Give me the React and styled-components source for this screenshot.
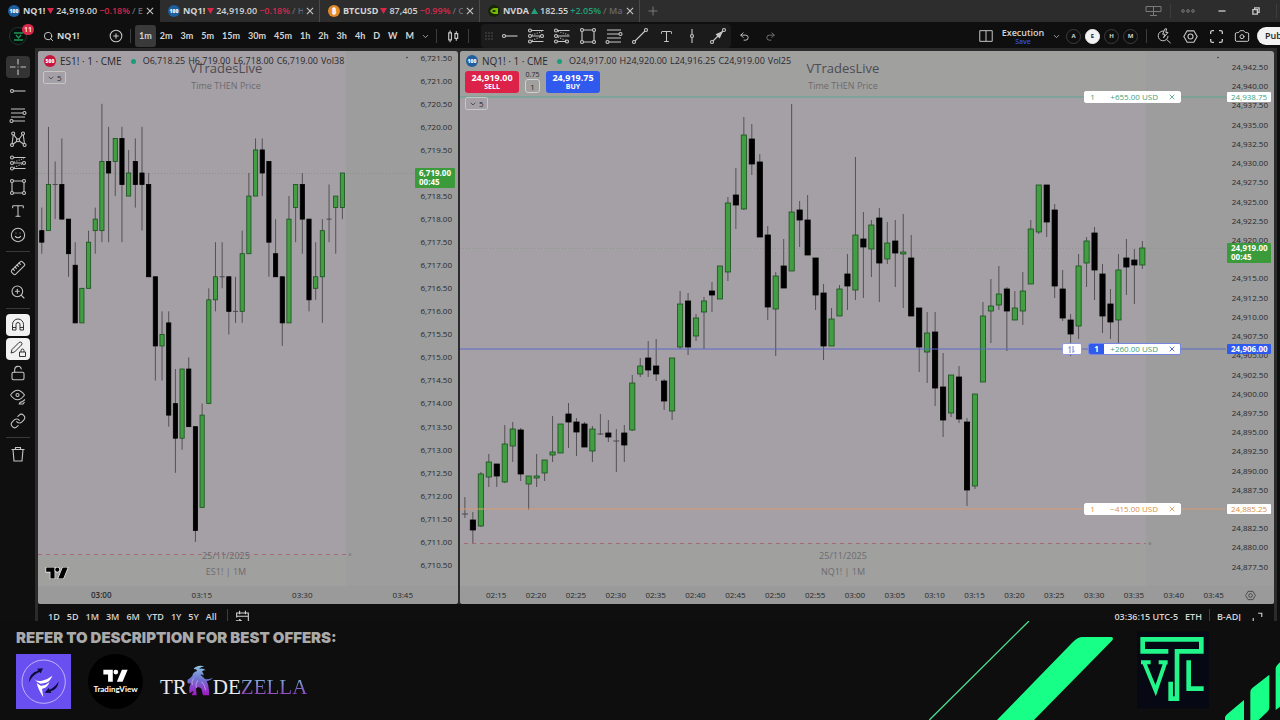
import React from 'react';
import styled, { createGlobalStyle, css } from 'styled-components';
import { Type, Smile, Ruler, ZoomIn, LockOpen, Link, Undo2, Redo2, ChevronDown, Search, CirclePlus, Camera } from 'lucide-react';

const GlobalStyle = createGlobalStyle`
  * { box-sizing: border-box; }
  body {
    margin: 0;
    background: #0e0e0e;
    color: #d4d4d4;
    font-family: 'Open Sans', 'Noto Sans', sans-serif;
    font-size: 9px;
    line-height: 12px;
  }
  button, input {
    font: inherit;
    color: inherit;
    background: none;
    border: 0;
    padding: 0;
    margin: 0;
  }
  button { cursor: pointer; }
  svg { display: block; flex: none; }
`;

const Page = styled.div`
  display: flex;
  flex-direction: column;
  min-height: 100vh;
  overflow: hidden;
`;

/* ---------- window tabs ---------- */

const TabBar = styled.header`
  display: flex;
  height: 22px;
  background: #2d2d2d;
`;

const Tab = styled.div`
  display: flex;
  align-items: center;
  width: 160px;
  padding: 0 4px 0 8px;
  gap: 2px;
  font-weight: 600;
  white-space: nowrap;
  background: ${p => (p.$active ? '#0f0f0f' : 'transparent')};
  border-right: 1px solid ${p => (p.$divider ? '#4a4a4a' : 'transparent')};
`;

const Symbol = styled.span`
  font-weight: 700;
`;

const Change = styled.span`
  color: ${p => (p.$up ? '#22a07a' : '#d8274b')};
`;

const TabHint = styled.span`
  flex: 1;
  min-width: 0;
  overflow: hidden;
  color: #6a6a6a;
`;

const CoinBadge = styled.span`
  display: flex;
  align-items: center;
  justify-content: center;
  flex: none;
  width: 12px;
  height: 12px;
  margin-right: 1px;
  border-radius: 50%;
  background: ${p => p.$bg};
  color: #fff;
  font-size: ${p => (p.$large ? 8 : 5)}px;
  line-height: 12px;
  font-weight: 800;
`;

const IconButton = styled.button`
  display: flex;
  align-items: center;
  justify-content: center;
  width: ${p => p.$w || 26}px;
  height: 22px;
  flex: none;
  color: ${p => (p.$dim ? '#7a7a7a' : '#c8c8c8')};
`;

const CloseButton = styled(IconButton)`
  width: 10px;
`;

const WindowControls = styled.div`
  display: flex;
  margin-left: auto;
  align-items: center;
`;

const Divider = styled.span`
  flex: none;
  width: 1px;
  height: 14px;
  margin: 0 ${p => p.$gap || 0}px;
  background: #3d3d3d;
`;

/* ---------- top toolbar ---------- */

const Toolbar = styled.nav`
  display: flex;
  align-items: center;
  height: 26px;
  padding-top: 2px;
  background: #0f0f0f;
  font-weight: 600;
  overflow: hidden;
`;

const Avatar = styled.button`
  position: relative;
  display: flex;
  align-items: center;
  justify-content: center;
  width: 18px;
  height: 18px;
  margin-left: 9px;
  border-radius: 50%;
  border: 1px solid #26302b;
  background: #07100f;
`;

const Notice = styled.span`
  position: absolute;
  top: -4px;
  right: -8px;
  width: 12px;
  height: 11px;
  border-radius: 6px;
  background: #d8274b;
  color: #fff;
  font-size: 7px;
  line-height: 11px;
`;

const SearchButton = styled.button`
  display: flex;
  align-items: center;
  gap: 3px;
  width: 63px;
  margin-left: 16px;
  font-weight: 700;
`;

const Interval = styled.button`
  height: 22px;
  padding: 0 4px;
  border-radius: 3px;
  font-family: Lato, sans-serif;
  font-weight: 700;
  background: ${p => (p.$active ? '#3a3a3a' : 'transparent')};
`;

const Favorites = styled.div`
  display: flex;
  align-items: center;
  height: 24px;
  margin-left: 10px;
  padding: 0 0 0 4px;
  gap: 4px;
  border-radius: 4px;
  background: #1b1b1b;
`;

const FavoriteTools = styled.div`
  display: flex;
`;

const Spacer = styled.div`
  flex: 1;
`;

const LayoutName = styled.button`
  width: 46px;
  font-weight: 600;
  line-height: 10px;
  text-align: center;
`;

const SaveLabel = styled.span`
  display: block;
  color: #3152e0;
  font-size: 7px;
  line-height: 7px;
`;

const Preset = styled.button`
  flex: none;
  width: 15px;
  height: 15px;
  margin-right: 4px;
  border-radius: 50%;
  border: 1px solid ${p => (p.$active ? '#f2f2f2' : '#413a3c')};
  background: ${p => (p.$active ? '#f2f2f2' : 'transparent')};
  color: ${p => (p.$active ? '#222' : '#d4d4d4')};
  font-size: 6px;
  line-height: 13px;
  font-weight: 700;
`;

const Publish = styled.button`
  flex: none;
  width: 23px;
  height: 18px;
  margin-left: 2px;
  padding-left: 8px;
  border-radius: 9px 0 0 9px;
  background: #f2f2f2;
  color: #222;
  text-align: left;
  overflow: hidden;
`;

/* ---------- workspace ---------- */

const Workspace = styled.main`
  display: flex;
  flex: 1;
  min-height: 540px;
  padding-right: 3px;
  background: #0f0f0f;
`;

const SideBar = styled.aside`
  display: flex;
  flex-direction: column;
  align-items: center;
  flex: none;
  width: 35px;
  padding-top: 7px;
`;

const SideButton = styled.button`
  display: flex;
  align-items: center;
  justify-content: center;
  width: 24px;
  height: 22px;
  margin: 1px 0;
  border-radius: 4px;
  color: ${p => (p.$on ? '#333' : '#c4c4c4')};
  background: ${p => (p.$on ? '#f1f1f1' : p.$active ? '#343434' : 'transparent')};
`;

const SideRule = styled.span`
  width: 24px;
  height: 1px;
  margin: 4px 0;
  background: #3a3a3a;
`;

const Stage = styled.div`
  display: flex;
  flex-direction: column;
  flex: 1;
  min-width: 0;
  padding: 3px 3px 0;
  background: #2b2b2b;
`;

const Panes = styled.div`
  display: flex;
  flex: 1;
  gap: 2px;
`;

const Pane = styled.section`
  display: flex;
  flex-direction: column;
  flex: ${p => p.$grow} 1 0;
  min-width: 0;
  border-radius: 3px;
  overflow: hidden;
  background: #9c9d9c;
  color: #29292c;
`;

const PaneBody = styled.div`
  display: flex;
  flex: 1;
`;

const Plot = styled.div`
  position: relative;
  flex: 1;
  min-width: 0;
`;

const Canvas = styled.svg`
  position: absolute;
  inset: 0;
  width: 100%;
  height: 100%;
`;

const Watermark = styled.div`
  position: absolute;
  left: 0;
  right: 0;
  ${p => (p.$bottom ? css`bottom: 8px;` : css`top: 9px;`)}
  display: flex;
  flex-direction: column;
  align-items: center;
  gap: 4px;
  color: #6c6b6e;
`;

const WatermarkTitle = styled.div`
  color: #4d4c52;
  font-size: 13px;
  line-height: 16px;
`;

const Legend = styled.div`
  position: relative;
  display: flex;
  align-items: center;
  height: 12px;
  margin: 4px 0 0 6px;
  gap: 3px;
  font-size: 8px;
  white-space: nowrap;
`;

const LegendName = styled.span`
  font-size: 10px;
`;

const LiveDot = styled.span`
  width: 5px;
  height: 5px;
  margin: 0 4px 0 6px;
  border-radius: 50%;
  background: #1a9d79;
`;

const LegendValues = styled.span`
  display: flex;
  gap: 3px;
  font-size: 9px;
`;

const CollapseButton = styled.button`
  position: relative;
  display: flex;
  align-items: center;
  gap: 2px;
  height: 13px;
  margin: 4px 0 0 5px;
  padding: 0 3px;
  border: 1px solid #c6c6c6;
  border-radius: 2px;
  font-size: 8px;
`;

const TradeRow = styled.div`
  position: relative;
  display: flex;
  gap: 6px;
  height: 22px;
  margin: 4px 0 0 5px;
`;

const TradeButton = styled.button`
  width: 54px;
  border-radius: 3px;
  background: ${p => (p.$buy ? '#3059ee' : '#dc2248')};
  color: #fff;
  font-weight: 700;
  font-size: 9px;
  line-height: 9px;
`;

const TradeSide = styled.span`
  display: block;
  font-size: 7px;
`;

const Quantity = styled.label`
  display: flex;
  flex-direction: column;
  align-items: center;
  width: 15px;
  font-size: 7px;
  line-height: 7px;
`;

const QuantityInput = styled.input`
  width: 15px;
  height: 14px;
  margin-top: 1px;
  border: 1px solid #d0d0d0;
  border-radius: 3px;
  text-align: center;
  font-size: 8px;
`;

const Order = styled.div`
  position: absolute;
  right: 45px;
  top: ${p => p.$at}%;
  display: flex;
  align-items: center;
  height: 12px;
  margin-top: -6px;
  gap: ${p => (p.$open ? 6 : 0)}px;
  color: ${p => p.$color};
`;

const OrderPill = styled.div`
  display: flex;
  align-items: center;
  width: ${p => p.$w}px;
  height: 12px;
  border-radius: 2px;
  background: #fff;
  border: 1px solid ${p => p.$color || '#fff'};
  font-size: 8px;
  line-height: 10px;
  overflow: hidden;
`;

const OrderCount = styled.span`
  width: 15px;
  text-align: center;
  ${p => p.$solid && css`
    background: #3059ee;
    color: #fff;
    font-weight: 700;
  `}
`;

const OrderValue = styled.span`
  flex: 1;
  text-align: right;
  padding-right: 6px;
  color: ${p => p.$color};
`;

const OrderClose = styled.button`
  width: 16px;
  display: flex;
  justify-content: center;
  color: ${p => p.$color};
`;

const PriceAxis = styled.div`
  position: relative;
  display: flex;
  flex-direction: column;
  justify-content: space-between;
  flex: none;
  width: ${p => p.$w}px;
  padding: ${p => p.$pad};
  font-size: 8px;
  line-height: 10px;
  text-align: right;
`;

const PriceTag = styled.div`
  position: absolute;
  left: 1px;
  right: 3px;
  top: ${p => p.$at}%;
  margin-top: -5px;
  padding: 0 3px 0 4px;
  border-radius: 1px;
  background: ${p => p.$bg};
  color: ${p => p.$color || '#fff'};
  font-weight: ${p => (p.$color ? 400 : 700)};
  line-height: ${p => (p.$tall ? 9 : 10)}px;
  ${p => p.$tall && css`padding-bottom: 2px;`}
  text-align: left;
`;

const TimeAxis = styled.div`
  display: flex;
  align-items: center;
  height: 18px;
  background: #999a99;
  font-size: 8px;
`;

const TimeLabels = styled.div`
  display: flex;
  justify-content: space-between;
  flex: 1;
  padding: ${p => p.$pad};
`;

const TimeLabel = styled.span`
  font-weight: ${p => (p.$major ? 600 : 400)};
`;

const BottomBar = styled.div`
  display: flex;
  align-items: flex-start;
  height: 17px;
  background: #0f0f0f;
  font-size: 9px;
  line-height: 26px;
  font-weight: 600;
  overflow: hidden;
`;

const RangeList = styled.div`
  display: flex;
  gap: 7px;
  padding: 0 10px;
`;

const ClipDivider = styled(Divider)`
  margin-top: 5px;
`;

const BottomIcon = styled.button`
  height: 26px;
  padding: 0 11px 0 ${p => (p.$tight ? 4 : 7)}px;
`;

const BottomInfo = styled.div`
  display: flex;
  gap: 7px;
  margin-left: auto;
`;

/* ---------- banner ---------- */

const Banner = styled.footer`
  position: relative;
  flex: none;
  height: 99px;
  padding: 7px 16px 0;
  background: #0e0e0e;
`;

const BannerTitle = styled.h2`
  margin: 0;
  font-family: Inter, sans-serif;
  font-size: 15px;
  line-height: 20px;
  font-weight: 900;
  color: #aaa;
`;

const Sponsors = styled.div`
  display: flex;
  align-items: center;
  gap: 17px;
  margin-top: 6px;
`;

const ViewLogo = styled.div`
  display: flex;
  flex-direction: column;
  align-items: center;
  justify-content: center;
  gap: 1px;
  width: 55px;
  height: 55px;
  border-radius: 50%;
  background: #000;
  color: #fff;
  font-family: Lato, sans-serif;
  font-size: 8px;
  line-height: 10px;
  font-weight: 700;
`;

const Zella = styled.div`
  display: flex;
  align-items: flex-end;
  font-family: 'Liberation Serif', serif;
  font-size: 21px;
  line-height: 24px;
  color: #e9e9ee;
`;

const ZellaFade = styled.span`
  background: linear-gradient(180deg, #7fb4dc 15%, #7a68c8 55%, #a13fc0 90%);
  background-clip: text;
  color: transparent;
`;

const Decor = styled.svg`
  position: absolute;
  right: 0;
  bottom: 0;
`;

/* ---------- icons ---------- */

const Glyph = ({ d, size = 18, fill, dots = [], w = 1.1 }) => (
  <svg width={size} height={size} viewBox="0 0 18 18" fill="none" stroke="currentColor" strokeWidth={w}>
    <path d={d} fill={fill || 'none'} />
    {dots.map(([x, y], i) => <circle key={i} cx={x} cy={y} r="1.5" />)}
  </svg>
);

const CrossIcon = () => <Glyph d="M9 1v5.500M9 11.500V17M1 9h5.500M11.500 9H17M8.500 9h1" />;
const RayIcon = () => <Glyph d="M4.500 9H16.500" dots={[[3, 9]]} />;
const FibIcon = () => <Glyph d="M2 3h14M2 7h12M2 11h14M4 15h12" dots={[[15.5, 7], [2.5, 15]]} />;
const PatternIcon = () => (
  <Glyph d="M3 14.500 4.200 5M5 5.200 8.500 9.500M9.800 9.500 13.200 5M14.300 5 15.500 14M4 14.200 8.200 11M14.500 14 10.200 11" dots={[[3, 15], [4.2, 3.5], [9, 10.3], [14, 3.5], [15.6, 15]]} />
);
const ProjectionIcon = () => (
  <svg width="18" height="18" viewBox="0 0 18 18" fill="none" stroke="currentColor" strokeWidth="1.1">
    <path d="M4.500 3.500H16.500M4.500 9H13.500M4.500 14.500H16.500" />
    <path d="M5 8 15 4.500M5 13.500l8-3.500" strokeDasharray="1 1.500" />
    <circle cx="3" cy="3.500" r="1.500" /><circle cx="3" cy="9" r="1.500" />
    <circle cx="3" cy="14.500" r="1.500" /><circle cx="15" cy="9" r="1.500" />
  </svg>
);
const ChannelIcon = () => (
  <svg width="18" height="18" viewBox="0 0 18 18" fill="none" stroke="currentColor" strokeWidth="1.1">
    <path d="M4.500 3.500H16.500M4.500 9H16.500M4.500 14.500H12.500" />
    <path d="M5 4.500 16 8M5 10l8 3.500" strokeDasharray="1 1.500" />
    <circle cx="3" cy="3.500" r="1.500" /><circle cx="3" cy="9" r="1.500" />
    <circle cx="3" cy="14.500" r="1.500" /><circle cx="14" cy="14.500" r="1.500" />
  </svg>
);
const BoxIcon = () => (
  <Glyph d="M4.500 3h9M4.500 15h9M3 4.500v9M15 4.500v9" dots={[[3, 3], [15, 3], [3, 15], [15, 15]]} />
);
const TrendIcon = () => <Glyph d="M4 14 14 4" dots={[[3, 15], [15, 3]]} />;
const VLineIcon = () => <Glyph d="M9 2v5.500M9 10.500V16" dots={[[9, 9]]} />;
const ArrowLineIcon = () => (
  <svg width="18" height="18" viewBox="0 0 18 18" fill="none" stroke="currentColor" strokeWidth="1.1">
    <path d="M4 14 14 4" /><path d="M13 5 7.500 7.500l3 3z" fill="currentColor" />
    <circle cx="3" cy="15" r="1.500" /><circle cx="15" cy="3" r="1.500" />
  </svg>
);
const MagnetIcon = () => <Glyph d="M3.500 14V8.500a5.500 5.500 0 0 1 11 0V14H11V8.500a2 2 0 0 0-4 0V14zM3.500 11.500H7M11 11.500h3.500" w={1} />;
const PencilLockIcon = () => <Glyph d="M2 13l1-3.500L10 2.500q1.500-1 2.500 0t0 2.500L5.500 12zM10.500 12h6v4.500h-6zM12 12v-1.500a1.500 1.500 0 0 1 3 0V12" w={1} />;
const EyeIcon = () => <Glyph d="M1.500 7q7-9.500 14 0-7 9.500-14 0M10 16.500q1-3 3-2.500l3-2.500M11 16h3l1.500-2" dots={[[8.5, 7]]} />;
const TrashIcon = () => <Glyph d="M2.500 4.500h13M6.500 4.500V2.500h5v2M4 4.500 5 16h8l1-11.500" />;
const CandleIcon = () => <Glyph size={14} d="M3.500 5h3.500v9H3.500zM5.250 2v3M5.250 14v3M11.500 6H15v6h-3.500zM13.250 3v3M13.250 12v3" w={1.5} />;
const GridIcon = () => <Glyph size={16} d="M2 3h14v12H2zM9 3v12" />;
const HexIcon = ({ size = 18 }) => <Glyph size={size} d="M5 2.200h8L17 9l-4 6.800H5L1 9zM12 9a3 3 0 1 1-6 0 3 3 0 0 1 6 0" w={1.3} />;
const FullIcon = () => <Glyph size={15} d="M2 6V4q0-2 2-2h2M12 2h2q2 0 2 2v2M16 12v2q0 2-2 2h-2M6 16H4q-2 0-2-2v-2" w={1.6} />;
const FlashSearchIcon = () => <Glyph size={16} d="M9 3.500A5.500 5.500 0 1 0 13.500 9M12 13l4.500 4M10 1 7.500 7H10L8.500 11 13.500 5H11L12 1z" />;
const XIcon = ({ size = 8 }) => <Glyph size={size} d="M2 2 16 16M16 2 2 16" w={2.4} />;
const PlusIcon = () => <Glyph size={10} d="M9 1v16M1 9h16" w={1.8} />;
const ScreensIcon = () => (
  <svg width="17" height="12" viewBox="0 0 17 12" fill="none" stroke="currentColor">
    <path d="M1 1.500h15v5H1zM8.500 1.500v9M5 10.500h7" />
  </svg>
);
const DotsIcon = () => (
  <svg width="14" height="6" viewBox="0 0 14 6" fill="none" stroke="currentColor">
    <circle cx="2" cy="3" r="1.300" /><circle cx="7" cy="3" r="1.300" /><circle cx="12" cy="3" r="1.300" />
  </svg>
);
const RestoreIcon = () => <Glyph size={8} d="M2 6h10v10H2zM6 6V2h10v10h-4" w={3} />;
const MinimizeIcon = () => <Glyph size={8} d="M1 9h16" w={3} />;
const GripIcon = () => (
  <svg width="8" height="10" viewBox="0 0 8 10" fill="#555">
    {[1, 4, 7].map(y => [1, 4, 7].map(x => <circle key={`${x}-${y}`} cx={x} cy={y + 1} r=".8" />))}
  </svg>
);
const SwapIcon = () => <Glyph size={9} d="M6 16V3L3 6.500M12 2v13l3-3.500" w={1.6} />;
const CalendarIcon = () => <Glyph size={15} d="M2 9V3.500h14V15M2 7.500h14M5.500 1v4M12.500 1v4M1 13h6M5 11l2.500 2L5 15" w={1.3} />;
const TvMark = ({ width = 26, color = '#fff', outline }) => (
  <svg width={width} height={width / 2} viewBox="-1 -1 38 20" fill={color} stroke={outline} strokeWidth={outline ? 2 : 0} paintOrder="stroke">
    <path d="M0 0h14v18H7V7H0z" /><circle cx="18.500" cy="3.500" r="3.500" /><path d="M27.500 0H36l-7.500 18H20z" />
  </svg>
);

/* ---------- data ---------- */

const tabs = [
  { badge: '100', bg: '#1f5f9f', name: 'NQ1!', price: '24,919.00', change: '−0.18%', hint: 'E', active: true },
  { badge: '100', bg: '#1f5f9f', name: 'NQ1!', price: '24,919.00', change: '−0.18%', hint: 'H', divider: true },
  { badge: '₿', bg: '#e38a26', name: 'BTCUSD', price: '87,405', change: '−0.99%', hint: 'C', divider: true },
  { badge: '', bg: '#16240a', name: 'NVDA', price: '182.55', change: '+2.05%', hint: 'Mai', up: true, divider: true },
];

const intervals = ['1m', '2m', '3m', '5m', '15m', '30m', '45m', '1h', '2h', '3h', '4h', 'D', 'W', 'M'];
const ranges = ['1D', '5D', '1M', '3M', '6M', 'YTD', '1Y', '5Y', 'All'];

const favorites = [
  ['Ray', RayIcon], ['Projection', ProjectionIcon], ['Channel', ChannelIcon], ['Rectangle', BoxIcon], ['Fib', FibIcon],
  ['Trend line', TrendIcon], ['Text', Type], ['Vertical line', VLineIcon], ['Arrow', ArrowLineIcon],
];

const sideTools = [
  [['Crosshair', CrossIcon, 'active'], ['Ray', RayIcon], ['Fib', FibIcon], ['Patterns', PatternIcon], ['Projection', ProjectionIcon], ['Rectangle', BoxIcon], ['Text', Type], ['Emoji', Smile]],
  [['Measure', Ruler], ['Zoom in', ZoomIn]],
  [['Magnet', MagnetIcon, 'on'], ['Keep drawing', PencilLockIcon, 'on'], ['Lock', LockOpen], ['Hide', EyeIcon], ['Link', Link]],
  [['Remove', TrashIcon]],
];

// high, body top, body bottom, low (quarter points below 6,721.50), up
const esTicks = [
  [13, 15, 16, 17, 0], [6, 11, 15, 15, 1], [9, 11, 11, 14, 0], [7, 11, 14, 14, 0], [14, 14, 17, 19, 0],
  [16, 18, 23, 23, 0], [20, 20, 23, 23, 1], [15, 16, 20, 20, 1], [13, 14, 15, 17, 1], [4, 9, 15, 16, 1],
  [6, 9, 10, 16, 0], [7, 7, 9, 12, 1], [6, 7, 11, 16, 0], [8, 10, 12, 12, 1], [7, 9, 11, 13, 0],
  [6, 10, 11, 15, 0], [10, 11, 19, 19, 0], [19, 19, 25, 28, 0], [22, 24, 25, 28, 1], [22, 23, 31, 32, 0],
  [27, 30, 33, 36, 0], [27, 27, 33, 34, 1], [26, 27, 32, 32, 0], [32, 32, 41, 42, 0], [30, 31, 39, 39, 1],
  [20, 21, 30, 30, 1], [16, 19, 21, 22, 1], [16, 19, 19, 20, 0], [19, 19, 22, 24, 0], [19, 22, 22, 23, 0],
  [15, 17, 22, 23, 1], [10, 12, 17, 17, 1], [7, 8, 12, 12, 1], [7, 8, 10, 12, 0], [9, 9, 16, 19, 0],
  [14, 17, 19, 19, 0], [19, 19, 23, 25, 0], [12, 14, 23, 23, 1], [11, 11, 13, 16, 1], [10, 11, 14, 17, 0],
  [14, 14, 21, 22, 0], [16, 19, 20, 21, 1], [14, 15, 19, 23, 1], [11, 14, 14, 16, 0], [12, 12, 13, 17, 1],
  [10, 10, 13, 14, 1],
];
const esCandles = esTicks.map(([h, a, b, l, up]) => [...[h, a, b, l].map(k => 57.7 + k * 11.53), up]);

const nqCandles = [
  [497, 514, 514, 518, 0], [512, 520, 530, 543, 0], [472, 474, 526, 527, 1], [454, 462, 477, 487, 1], [464, 464, 476, 487, 0],
  [425, 444, 482, 483, 1], [422, 429, 446, 462, 1], [428, 430, 474, 481, 0], [476, 476, 484, 510, 1], [454, 476, 478, 487, 1],
  [460, 460, 473, 481, 1], [416, 452, 455, 462, 1], [424, 424, 453, 453, 1], [403, 414, 422, 448, 0], [418, 422, 432, 456, 0],
  [422, 424, 447, 447, 0], [426, 429, 451, 462, 1], [414, 434, 434, 435, 0], [420, 433, 437, 442, 0], [429, 441, 441, 472, 0],
  [425, 433, 445, 462, 0], [375, 383, 430, 431, 1], [358, 366, 374, 377, 1], [341, 358, 370, 377, 0], [339, 366, 374, 381, 0],
  [379, 381, 401, 410, 0], [358, 358, 411, 420, 1], [291, 304, 347, 349, 1], [293, 301, 347, 355, 0], [314, 318, 336, 341, 1],
  [297, 301, 312, 349, 1], [282, 291, 295, 312, 0], [266, 266, 299, 299, 1], [197, 203, 272, 281, 1], [168, 195, 205, 229, 0],
  [117, 135, 209, 210, 1], [124, 139, 164, 175, 0], [154, 162, 237, 237, 0], [226, 235, 307, 320, 0], [272, 276, 309, 356, 1],
  [239, 266, 288, 288, 0], [104, 212, 271, 271, 1], [201, 210, 220, 247, 0], [195, 220, 255, 255, 0], [258, 258, 295, 310, 0],
  [284, 293, 346, 360, 0], [308, 319, 346, 346, 1], [285, 289, 316, 316, 1], [254, 274, 286, 310, 0], [157, 235, 290, 300, 1],
  [212, 239, 247, 298, 0], [220, 225, 249, 277, 1], [208, 218, 263, 302, 0], [222, 243, 259, 264, 1], [220, 241, 253, 287, 0],
  [214, 252, 254, 308, 1], [235, 258, 316, 316, 0], [308, 308, 347, 372, 0], [312, 333, 352, 383, 1], [312, 332, 388, 406, 0],
  [353, 387, 420, 437, 0], [375, 375, 413, 417, 1], [366, 377, 419, 423, 0], [418, 422, 490, 506, 0], [394, 394, 486, 489, 1],
  [302, 316, 382, 382, 1], [279, 306, 311, 343, 1], [266, 294, 305, 310, 1], [287, 289, 311, 351, 0], [291, 308, 320, 320, 1],
  [272, 291, 311, 325, 1], [220, 229, 284, 284, 1], [185, 185, 232, 234, 1], [185, 185, 222, 237, 0], [204, 210, 286, 298, 0],
  [270, 289, 318, 321, 0], [314, 320, 334, 356, 0], [254, 266, 326, 339, 1], [237, 241, 263, 287, 1], [227, 233, 270, 300, 0],
  [264, 274, 316, 333, 0], [289, 304, 322, 339, 0], [254, 270, 320, 343, 1], [239, 258, 267, 295, 0], [249, 260, 265, 304, 0],
  [241, 248, 265, 269, 1],
];

const esPrices = Array.from({ length: 23 }, (_, i) => 6721.5 - i * 0.5);
const nqPrices = Array.from({ length: 27 }, (_, i) => 24942.5 - i * 2.5);
const money = v => v.toLocaleString('en-US', { minimumFractionDigits: 2 });

const nqTimes = Array.from({ length: 19 }, (_, i) => {
  const m = 135 + i * 5;
  return `0${Math.floor(m / 60)}:${String(m % 60).padStart(2, '0')}`;
});

// share of the plot height for a canvas y
const pct = y => ((y - 51) / 535) * 100;

const Candles = ({ data, x0, step, width }) => data.map(([h, a, b, l, up], i) => {
  const x = x0 + i * step;
  const flat = b - a < 1;
  return (
    <g key={i}>
      <line x1={x} x2={x} y1={h} y2={l} stroke="#4b484c" strokeWidth="0.9" />
      {flat ? (
        <line x1={x - width / 2} x2={x + width / 2} y1={a} y2={a} stroke="#4b484c" />
      ) : (
        <rect
          x={x - width / 2 + 0.4}
          y={a}
          width={width - 0.8}
          height={b - a}
          fill={up ? '#429e42' : '#000'}
          stroke={up ? '#1b4f1e' : '#000'}
          strokeWidth="0.8"
        />
      )}
    </g>
  );
});

const Mark = ({ top, sub }) => (
  <>
    <Watermark>
      <WatermarkTitle>{top}</WatermarkTitle>
      <span>Time THEN Price</span>
    </Watermark>
    <Watermark $bottom>
      <span>25/11/2025</span>
      <span>{sub}</span>
    </Watermark>
  </>
);

const TvSpot = styled.div`
  position: absolute;
  left: 7px;
  bottom: 7px;
`;

const AxisGear = styled.span`
  color: #3a3a3d;
`;

const SideIcon = styled.span`
  display: flex;
  ${p => p.$flip && css`transform: scaleX(-1);`}
`;

const EsPane = () => (
  <Pane $grow={420}>
    <PaneBody>
      <Plot>
        <Canvas viewBox="38 51 376 535" preserveAspectRatio="none">
          <rect x="38" y="51" width="308" height="535" fill="#a0a09f" />
          <rect x="38" y="51" width="308" height="503" fill="#a5a0a5" />
          <line x1="38" x2="414" y1="173.500" y2="173.500" stroke="#859285" strokeDasharray="1 2" />
          <line x1="38" x2="346" y1="554.500" y2="554.500" stroke="#a8687a" strokeDasharray="4 4" />
          <Candles data={esCandles} x0={41.8} step={6.68} width={5} />
          <circle cx="350" cy="554.500" r="1.500" fill="#858585" />
          <circle cx="407" cy="57.500" r="0.800" fill="#333" />
        </Canvas>
        <Mark top="VTradesLive" sub="ES1! | 1M" />
        <Legend>
          <CoinBadge $bg="#c6143e">500</CoinBadge>
          <LegendName>ES1! · 1 · CME</LegendName>
          <LiveDot />
          <LegendValues>
            <span>O6,718.25</span><span>H6,719.00</span><span>L6,718.00</span><span>C6,719.00</span><span>Vol38</span>
          </LegendValues>
        </Legend>
        <CollapseButton aria-label="Indicators"><ChevronDown size={8} />5</CollapseButton>
        <TvSpot><TvMark width={24} color="#000" outline="#fff" /></TvSpot>
      </Plot>
      <PriceAxis $w={44} $pad="2px 6px 16px 0">
        {esPrices.map(p => <span key={p}>{money(p)}</span>)}
        <PriceTag $at={pct(173)} $bg="#3b9b3b" $tall>6,719.00<br />00:45</PriceTag>
      </PriceAxis>
    </PaneBody>
    <TimeAxis>
      <TimeLabels $pad="0 45px 0 53px">
        <TimeLabel $major>03:00</TimeLabel>
        <TimeLabel>03:15</TimeLabel>
        <TimeLabel>03:30</TimeLabel>
        <TimeLabel>03:45</TimeLabel>
      </TimeLabels>
    </TimeAxis>
  </Pane>
);

const PendingOrder = ({ y, value, color }) => (
  <Order $at={pct(y)} $color={color}>
    <OrderPill $w={97}>
      <OrderCount>1</OrderCount>
      <OrderValue $color={color}>{value}</OrderValue>
      <OrderClose $color={color} aria-label="Cancel order"><XIcon size={6} /></OrderClose>
    </OrderPill>
  </Order>
);

const NqPane = () => (
  <Pane $grow={814}>
    <PaneBody>
      <Plot>
        <Canvas viewBox="460 51 766 535" preserveAspectRatio="none">
          <rect x="460" y="51" width="686" height="535" fill="#a0a09f" />
          <rect x="460" y="97" width="686" height="446" fill="#a5a0a5" />
          <line x1="460" x2="1226" y1="248.500" y2="248.500" stroke="#8b988b" strokeDasharray="1 2" />
          <line x1="464" x2="1146" y1="543.500" y2="543.500" stroke="#a8687a" strokeDasharray="4 4" />
          <Candles data={nqCandles} x0={464.9} step={7.97} width={6} />
          <line x1="460" x2="1226" y1="97" y2="97" stroke="#5aa68f" />
          <line x1="460" x2="1226" y1="349" y2="349" stroke="#5b68c8" />
          <line x1="460" x2="1226" y1="509" y2="509" stroke="#d79a72" />
          <circle cx="1150" cy="543.500" r="1.500" fill="#858585" />
          <circle cx="1218" cy="57.500" r="0.800" fill="#333" />
        </Canvas>
        <Mark top="VTradesLive" sub="NQ1! | 1M" />
        <Legend>
          <CoinBadge $bg="#1f5f9f">100</CoinBadge>
          <LegendName>NQ1! · 1 · CME</LegendName>
          <LiveDot />
          <LegendValues>
            <span>O24,917.00</span><span>H24,920.00</span><span>L24,916.25</span><span>C24,919.00</span><span>Vol25</span>
          </LegendValues>
        </Legend>
        <TradeRow>
          <TradeButton>24,919.00<TradeSide>SELL</TradeSide></TradeButton>
          <Quantity>
            0.75
            <QuantityInput defaultValue="1" aria-label="Quantity" />
          </Quantity>
          <TradeButton $buy>24,919.75<TradeSide>BUY</TradeSide></TradeButton>
        </TradeRow>
        <CollapseButton aria-label="Indicators"><ChevronDown size={8} />5</CollapseButton>
        <PendingOrder y={97} value="+655.00 USD" color="#3c9f7c" />
        <Order $at={pct(349)} $open $color="#3059ee">
          <OrderPill $w={20} $color="#8d98dd"><OrderClose $color="#5565cc" aria-label="Reverse position"><SwapIcon /></OrderClose></OrderPill>
          <OrderPill $w={93} $color="#7585e0">
            <OrderCount $solid>1</OrderCount>
            <OrderValue $color="#3c9f7c">+260.00 USD</OrderValue>
            <OrderClose $color="#3049c8" aria-label="Close position"><XIcon size={6} /></OrderClose>
          </OrderPill>
        </Order>
        <PendingOrder y={509} value="−415.00 USD" color="#d98f45" />
      </Plot>
      <PriceAxis $w={48} $pad="11px 6px 14px 0">
        {nqPrices.map(p => <span key={p}>{money(p)}</span>)}
        <PriceTag $at={pct(97)} $bg="#fff" $color="#3c9f7c">24,938.75</PriceTag>
        <PriceTag $at={pct(248)} $bg="#3b9b3b" $tall>24,919.00<br />00:45</PriceTag>
        <PriceTag $at={pct(349)} $bg="#3059ee">24,906.00</PriceTag>
        <PriceTag $at={pct(509)} $bg="#fff" $color="#d98f45">24,885.25</PriceTag>
      </PriceAxis>
    </PaneBody>
    <TimeAxis>
      <TimeLabels $pad="0 2px 0 26px">
        {nqTimes.map(t => <TimeLabel key={t}>{t}</TimeLabel>)}
      </TimeLabels>
      <IconButton $w={48} aria-label="Axis settings"><AxisGear><HexIcon size={11} /></AxisGear></IconButton>
    </TimeAxis>
  </Pane>
);

const App = () => (
  <>
    <GlobalStyle />
    <Page>
      <TabBar>
        {tabs.map((t, i) => (
          <Tab key={i} $active={t.active} $divider={t.divider}>
            <CoinBadge $bg={t.bg} $large={t.badge === '₿'}>
              {t.badge || (
                <svg width="8" height="6" viewBox="0 0 8 6"><path d="M0 3q2-3 4-3h4v6H4Q2 6 0 3m2 0q2 2 4 0Q4 1 2 3" fill="#76b900" /></svg>
              )}
            </CoinBadge>
            <Symbol>{t.name}</Symbol>
            <Change $up={t.up}>
              <svg width="7" height="6" viewBox="0 0 7 6" fill="currentColor"><path d={t.up ? 'M0 6h7L3.500 0z' : 'M0 0h7L3.500 6z'} /></svg>
            </Change>
            <span>{t.price}</span>
            <Change $up={t.up}>{t.change}</Change>
            <TabHint>/ {t.hint}</TabHint>
            <CloseButton aria-label="Close tab"><XIcon /></CloseButton>
          </Tab>
        ))}
        <IconButton $dim aria-label="New tab"><PlusIcon /></IconButton>
        <WindowControls>
          <IconButton $dim $w={34} aria-label="Screens"><ScreensIcon /></IconButton>
          <Divider />
          <IconButton $dim $w={34} aria-label="More"><DotsIcon /></IconButton>
          <IconButton $w={34} aria-label="Minimize"><MinimizeIcon /></IconButton>
          <IconButton $w={34} aria-label="Restore"><RestoreIcon /></IconButton>
          <Divider $gap={3} />
        </WindowControls>
      </TabBar>

      <Toolbar>
        <Avatar aria-label="Account">
          <svg width="11" height="9" viewBox="0 0 11 9" fill="none" stroke="#1f9a55" strokeWidth="1.300"><path d="M1 1h9M3 3l2.500 3L8 3M1 8h9" /></svg>
          <Notice>11</Notice>
        </Avatar>
        <SearchButton><Search size={11} />NQ1!</SearchButton>
        <IconButton $w={20} aria-label="Compare"><CirclePlus size={14} strokeWidth={1.8} /></IconButton>
        <Divider $gap={4} />
        {intervals.map((t, i) => <Interval key={t} $active={i === 0}>{t}</Interval>)}
        <IconButton $w={15} aria-label="More intervals"><ChevronDown size={9} /></IconButton>
        <Divider $gap={3} />
        <IconButton aria-label="Chart type"><CandleIcon /></IconButton>
        <Divider $gap={2} />
        <Favorites>
          <GripIcon />
          <FavoriteTools>
            {favorites.map(([label, Icon]) => <IconButton key={label} aria-label={label}><Icon size={15} strokeWidth={1.6} /></IconButton>)}
          </FavoriteTools>
        </Favorites>
        <IconButton aria-label="Undo"><Undo2 size={11} /></IconButton>
        <IconButton $dim aria-label="Redo"><Redo2 size={11} /></IconButton>
        <Spacer />
        <IconButton $w={28} aria-label="Layouts"><GridIcon /></IconButton>
        <LayoutName>Execution<SaveLabel>Save</SaveLabel></LayoutName>
        <IconButton $w={20} aria-label="Manage layouts"><ChevronDown size={9} /></IconButton>
        {['A', 'E', 'H', 'M'].map(n => <Preset key={n} $active={n === 'E'}>{n}</Preset>)}
        <Divider $gap={4} />
        <IconButton aria-label="Quick search"><FlashSearchIcon /></IconButton>
        <IconButton aria-label="Settings"><HexIcon size={15} /></IconButton>
        <IconButton aria-label="Full screen"><FullIcon /></IconButton>
        <IconButton aria-label="Snapshot"><Camera size={16} strokeWidth={1.5} /></IconButton>
        <Publish>Publish</Publish>
      </Toolbar>

      <Workspace>
        <SideBar>
          {sideTools.map((group, g) => (
            <React.Fragment key={g}>
              {g > 0 && <SideRule />}
              {group.map(([label, Icon, state]) => (
                <SideButton key={label} aria-label={label} $active={state === 'active'} $on={state === 'on'}>
                  <SideIcon $flip={label === 'Measure'}><Icon size={16} strokeWidth={1.6} /></SideIcon>
                </SideButton>
              ))}
            </React.Fragment>
          ))}
        </SideBar>
        <Stage>
          <Panes>
            <EsPane />
            <NqPane />
          </Panes>
          <BottomBar>
            <RangeList>
              {ranges.map(r => <button key={r}>{r}</button>)}
            </RangeList>
            <ClipDivider />
            <BottomIcon aria-label="Go to date"><CalendarIcon /></BottomIcon>
            <BottomInfo>
              <span>03:36:15 UTC-5</span>
              <span>ETH</span>
              <ClipDivider />
              <span>B-ADJ</span>
              <BottomIcon $tight aria-label="Expand"><Glyph size={11} d="M10 2h6v6M2 10v6h6" w={1.8} /></BottomIcon>
            </BottomInfo>
          </BottomBar>
        </Stage>
      </Workspace>

      <Banner>
        <BannerTitle>REFER TO DESCRIPTION FOR BEST OFFERS:</BannerTitle>
        <Sponsors>
          <svg width="55" height="55" viewBox="0 0 165 165">
            <rect width="165" height="165" fill="#6a4ff0" />
            <circle cx="83" cy="83" r="65" fill="none" stroke="#cfc8ff" strokeWidth="2.500" />
            <path d="M38 86q2-30 28-36l-2-6 17-1-7 15-4-4q-20 8-32 32M128 82q-2 24-24 30l2 5-20-1 12-14 3 5q16-6 27-25" fill="#0d0c3a" />
            <path d="M53 74Q62 84 78 80 96 76 109 65 103 83 86 87L74 89Q62 84 53 74zM62 87 74 95Q88 96 100 85 96 99 83 103L78 105 82 130Q66 106 62 87z" fill="#fff" />
          </svg>
          <ViewLogo>
            <TvMark width={27} />
            TradingView
          </ViewLogo>
          <Zella>
            TR
            <svg width="26" height="34" viewBox="0 0 78 102">
              <defs>
                <linearGradient id="beast" x1="0" y1="0" x2="0" y2="1">
                  <stop offset="0" stopColor="#8cc4e4" />
                  <stop offset="0.450" stopColor="#6f74cf" />
                  <stop offset="1" stopColor="#a316c4" />
                </linearGradient>
              </defs>
              <path d="M26 6Q38 0 52 4 40 6 36 12q12-4 20 4-8-1-11 4 6 4 4 12-4-5-9-3 8 6 14 13 8 2 24-4-8 10-19 11 8 14 7 42H48l-5-20q-10-8-16 0l2 20H14l6-14-12 8Q4 70 12 54-2 60 2 44 10 40 16 32 18 22 30 18q0-6-10-6 2-4 6-6" fill="url(#beast)" />
              <path d="M20 40Q12 50 16 60M32 46q-8 12-4 22M44 50q10 10 12 26" fill="none" stroke="#d9b8f0" strokeWidth="2" />
            </svg>
            DE<ZellaFade>ZELLA</ZellaFade>
          </Zella>
        </Sponsors>
        <Decor width="380" height="99" viewBox="0 63 1140 297">
          <path d="M88 360 387 63" stroke="#4be08f" strokeWidth="4" />
          <path d="M291 360 518 127Q533 111 548 111H634Q642 113 637 121L402 360z" fill="#17ff87" />
          <rect x="712" y="95" width="214" height="230" fill="#060813" />
          <g fill="none" stroke="#22f58a" strokeWidth="14">
            <path d="M805 154H728V118H904V154H831V296H812V245" />
            <path d="M723 187H752M732 187 767 272 796 187M803 187H776" strokeWidth="12" />
            <path d="M866 181V266H911" />
          </g>
          <path d="M975 360V352Q977 346 982 342L1032 300V360zM1051 360V276Q1051 269 1057 264L1108 224V322Q1108 330 1102 335L1076 360zM1127 330V205Q1128 198 1140 187V320z" fill="#17ff87" />
        </Decor>
      </Banner>
    </Page>
  </>
);

export default App;
